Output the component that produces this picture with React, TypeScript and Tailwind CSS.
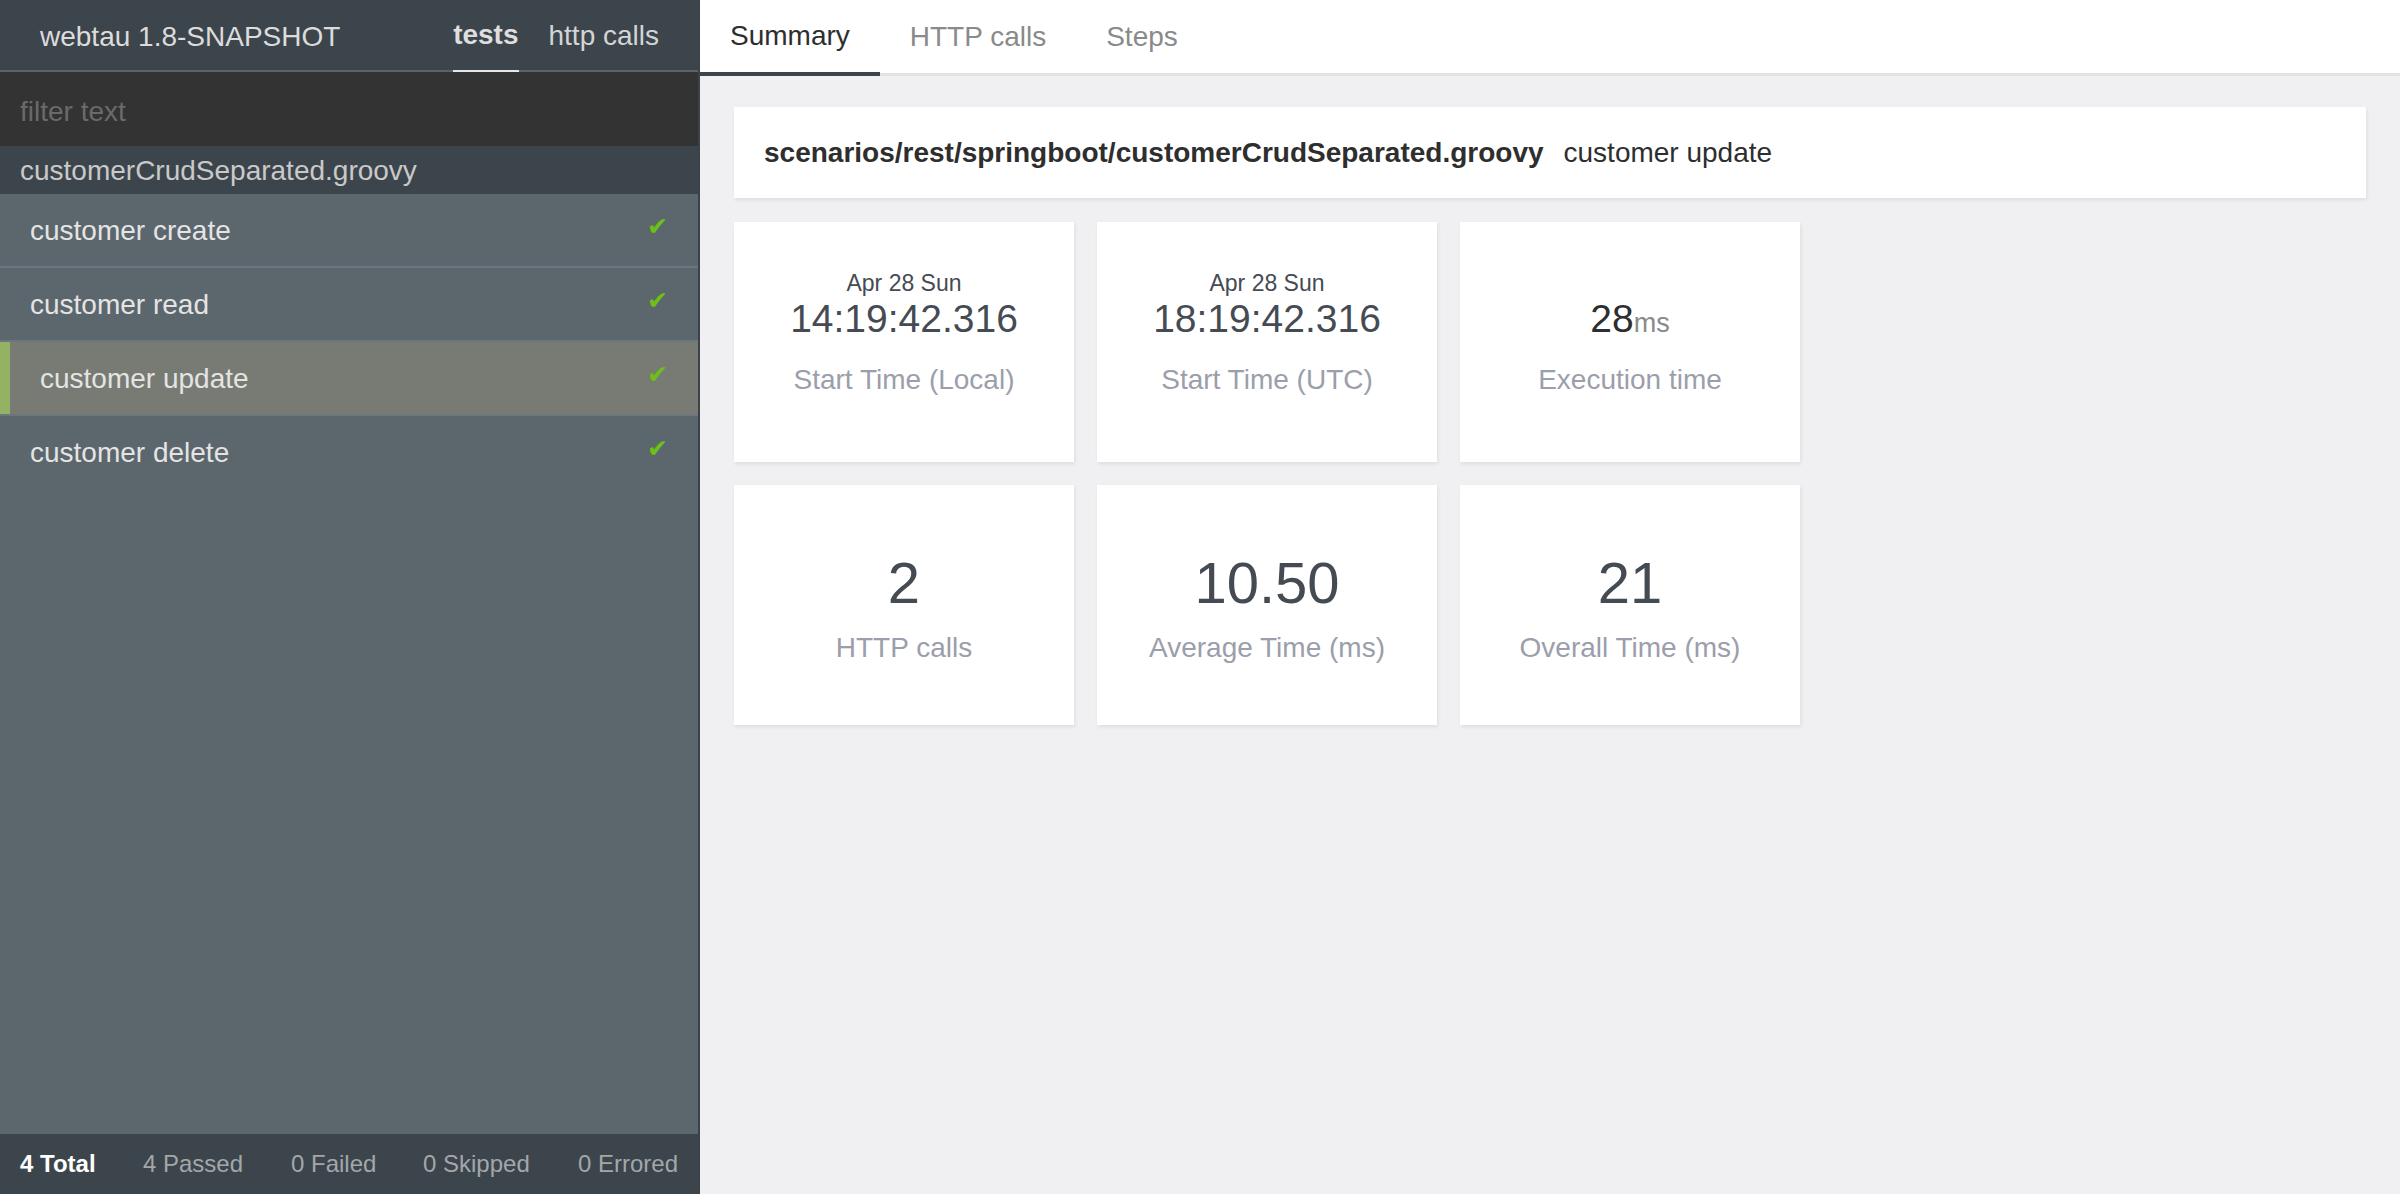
import React from "react";

const font = { fontFamily: '"Liberation Sans", Arial, Helvetica, sans-serif' };

const tests = [
  { name: "customer create", selected: false },
  { name: "customer read", selected: false },
  { name: "customer update", selected: true },
  { name: "customer delete", selected: false },
];

function Sidebar() {
  return (
    <div className="flex flex-col w-[700px] h-full bg-[#5b666d] border-r-2 border-[#3b434a] shrink-0">
      {/* Header */}
      <div className="flex justify-between h-[72px] bg-[#3c454c] border-b-2 border-[#59636a]">
        <div className="flex items-center pl-[40px] pt-[3px] text-[28px] text-[#dcdcdc]">webtau 1.8-SNAPSHOT</div>
        <div className="flex gap-[30px] pr-[39px]">
          <div className="flex items-center text-[28px] font-bold text-[#dedede] border-b-2 border-[#e6e6e6] -mb-[2px]">
            tests
          </div>
          <div className="flex items-center pt-[2px] text-[28px] text-[#d4d4d4]">http calls</div>
        </div>
      </div>

      {/* Filter */}
      <div className="h-[74px] bg-[#333333] flex items-center pt-[5px]">
        <input
          placeholder="filter text"
          className="w-full bg-transparent pl-[20px] text-[28px] text-[#ccc] placeholder:text-[#6a6a6a] outline-none"
          style={font}
        />
      </div>

      {/* Group */}
      <div className="h-[48px] bg-[#3c454c] flex items-center pl-[20px] pt-[2px] text-[28px] text-[#c9c9c9]">
        customerCrudSeparated.groovy
      </div>

      {/* Tests */}
      <div className="flex-1 flex flex-col">
        {tests.map((t, i) => (
          <div
            key={t.name}
            className={`flex items-center justify-between pr-[30px] ${
              i > 0 ? "h-[74px] border-t-2 border-[#6b767e]" : "h-[72px]"
            } ${t.selected ? "bg-[#777b73]" : ""}`}
          >
            <div className="flex items-center h-full">
              {t.selected && <div className="w-[10px] h-full bg-[#93b264]" />}
              <span className="pl-[30px] pt-[2px] text-[28px] text-[#e4e4e4]">{t.name}</span>
            </div>
            <span className="text-[25px] text-[#6cc016] -mt-[6px]">✔</span>
          </div>
        ))}
      </div>

      {/* Footer */}
      <div className="h-[60px] bg-[#3c454c] flex items-center pl-[20px] text-[24px] text-[#a3a7aa]">
        <span className="font-bold text-white w-[123px]">4 Total</span>
        <span className="w-[148px]">4 Passed</span>
        <span className="w-[132px]">0 Failed</span>
        <span className="w-[155px]">0 Skipped</span>
        <span>0 Errored</span>
      </div>
    </div>
  );
}

function StatCard({ date, value, unit, label, big }: { date?: string; value: string; unit?: string; label: string; big?: boolean }) {
  if (big) {
    return (
      <div className="w-[340px] h-[240px] bg-white shadow-[1px_2px_4px_rgba(0,0,0,0.08)] flex flex-col items-center pt-[65px]">
        <div className="text-[58px] leading-[66px] text-[#454b53]">{value}</div>
        <div className="mt-[16px] text-[28px] leading-[32px] text-[#9b9eab]">{label}</div>
      </div>
    );
  }
  return (
    <div className="w-[340px] h-[240px] bg-white shadow-[1px_2px_4px_rgba(0,0,0,0.08)] flex flex-col items-center pt-[47px]">
      <div className="text-[23px] leading-[28px] h-[28px] text-[#454b53]">{date}</div>
      <div className="leading-[44px] h-[44px] flex items-baseline">
        <span className={`text-[39px] ${unit ? "text-[#2e2e2e]" : "text-[#454b53]"}`}>{value}</span>
        {unit && <span className="text-[27px] text-[#8a8a8a]">{unit}</span>}
      </div>
      <div className="mt-[23px] text-[28px] leading-[32px] text-[#9b9eab]">{label}</div>
    </div>
  );
}

export default function App() {
  return (
    <div className="flex w-[2400px] h-[1194px] overflow-hidden" style={font}>
      <Sidebar />
      <div className="flex-1 flex flex-col bg-[#f0f0f2]">
        {/* Tabs */}
        <div className="flex h-[76px] bg-white border-b-[3px] border-[#e2e2e4]">
          <div className="flex items-center px-[30px] text-[28px] text-[#2e2e2e] border-b-4 border-[#3c454c] -mb-[3px]">
            Summary
          </div>
          <div className="flex items-center px-[30px] text-[28px] text-[#8a8a8a]">HTTP calls</div>
          <div className="flex items-center px-[30px] text-[28px] text-[#8a8a8a]">Steps</div>
        </div>

        <div className="flex flex-col pt-[31px] px-[34px]">
          <div className="h-[91px] bg-white shadow-[1px_2px_4px_rgba(0,0,0,0.08)] flex items-center pl-[30px] text-[28px] text-[#2e2e2e]">
            <span className="font-bold">scenarios/rest/springboot/customerCrudSeparated.groovy</span>
            <span className="ml-[20px]">customer update</span>
          </div>

          <div className="flex gap-[23px] mt-[24px]">
            <StatCard date="Apr 28 Sun" value="14:19:42.316" label="Start Time (Local)" />
            <StatCard date="Apr 28 Sun" value="18:19:42.316" label="Start Time (UTC)" />
            <StatCard date="" value="28" unit="ms" label="Execution time" />
          </div>
          <div className="flex gap-[23px] mt-[23px]">
            <StatCard big value="2" label="HTTP calls" />
            <StatCard big value="10.50" label="Average Time (ms)" />
            <StatCard big value="21" label="Overall Time (ms)" />
          </div>
        </div>
      </div>
    </div>
  );
}
